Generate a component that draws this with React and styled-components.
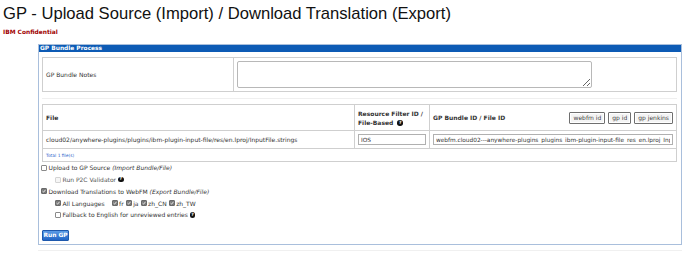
import React from 'react';
import styled, {createGlobalStyle} from 'styled-components';

const GlobalStyle = createGlobalStyle`
  body {
    margin: 0;
    background: #fff;
    font-family: "DejaVu Sans", Verdana, sans-serif;
    color: #333;
  }
`;

const Page = styled.div`
  padding: 4px 3px 0 3px;
  width: 682px;
`;

const Title = styled.h1`
  margin: 0;
  font-family: "Liberation Sans", Arial, sans-serif;
  font-weight: normal;
  font-size: 16.6px;
  line-height: 19px;
  color: #111;
`;

const Confidential = styled.div`
  margin-top: 5px;
  font-size: 5.9px;
  line-height: 8px;
  font-weight: bold;
  color: #a00000;
`;

const Panel = styled.div`
  margin: 8px 0 0 35px;
  width: 642px;
  border: 1px solid #a9bfdc;
`;

const PanelHeader = styled.div`
  height: 7px;
  line-height: 7px;
  padding-left: 1px;
  background: #0d5bb5;
  color: #fff;
  font-size: 5.9px;
  font-weight: bold;
`;

const PanelBody = styled.div`
  padding: 5px 4px 3px 3px;
`;

const Table = styled.table`
  width: 635px;
  border-collapse: collapse;
  table-layout: fixed;
  font-size: 6px;
`;

const Cell = styled.td`
  border: 1px solid #cfcfcf;
  padding: 0 3px;
  vertical-align: middle;
  font-weight: ${p => (p.$head ? 'bold' : 'normal')};
  height: ${p => p.$h}px;
  line-height: 9px;
  color: #333;
`;

const NotesArea = styled.textarea`
  display: block;
  width: 355px;
  height: 27px;
  margin: 0;
  box-sizing: border-box;
  border: 1px solid #b8b8b8;
  border-radius: 2px;
  font-size: 6px;
`;

const Divider = styled.div`
  height: 0;
  margin: 6px 0 5px 0;
  border-top: 1px solid #efefef;
`;

const HeadRow = styled.div`
  display: flex;
  align-items: center;
  justify-content: space-between;
`;

const Buttons = styled.div`
  display: flex;
  gap: 3px;
`;

const SmallButton = styled.button`
  height: 12px;
  padding: 0 3px;
  margin: 0;
  font-family: "DejaVu Sans", Verdana, sans-serif;
  font-size: 6px;
  color: #444;
  background: #f4f4f4;
  border: 1px solid #6f6f6f;
  box-shadow: inset 0 0 0 1px #fff;
  border-radius: 1px;
`;

const TextInput = styled.input`
  display: block;
  width: 100%;
  height: 11px;
  box-sizing: border-box;
  margin: 0;
  padding: 0 2px;
  border: 1px solid #b0b0b0;
  font-family: "DejaVu Sans", Verdana, sans-serif;
  font-size: 5.8px;
  color: #333;
`;

const Total = styled.span`
  font-size: 4.4px;
  color: #3366cc;
`;

const Options = styled.div`
  margin: 0 0 0 -1px;
`;

const Row = styled.div`
  display: flex;
  align-items: center;
  height: 11.75px;
  padding-left: ${p => (p.$nested ? 14 : 0)}px;
  font-size: 6px;
  color: ${p => (p.$disabled ? '#555' : '#333')};
`;

const Box = styled.span`
  display: inline-flex;
  align-items: center;
  justify-content: center;
  width: 6px;
  height: 6px;
  box-sizing: border-box;
  border-radius: 1px;
  border: 1px solid ${p => (p.$checked ? '#6a6a6a' : p.$disabled ? '#d4d4d4' : '#8a8a8a')};
  background: ${p => (p.$checked ? '#7a7a7a' : p.$disabled ? '#f6f6f6' : '#fff')};
  margin-right: 1.5px;
  margin-left: ${p => p.$gap || 0}px;
  flex: none;
`;

const Label = styled.span`
  white-space: nowrap;
`;

const Note = styled.i`
  margin-left: 2px;
`;

const Help = styled.span`
  display: inline-flex;
  align-items: center;
  justify-content: center;
  width: 5.5px;
  height: 5.5px;
  margin-left: 2px;
  border-radius: 50%;
  background: #111;
  color: #fff;
  font-size: 4.4px;
  font-weight: bold;
  line-height: 1;
  vertical-align: middle;
`;

const RunButton = styled.button`
  display: block;
  margin: 9px 0 0 0;
  width: 27px;
  height: 11px;
  padding: 0;
  white-space: nowrap;
  font-family: "DejaVu Sans", Verdana, sans-serif;
  font-size: 5.9px;
  font-weight: bold;
  color: #fff;
  background: linear-gradient(#5b9be6, #2265c6);
  border: 1px solid #1d58ad;
  border-radius: 1px;
`;

const Shadow = styled.div`
  margin: 5px 0 0 35px;
  width: 644px;
  border-top: 1px solid #f0f0f0;
`;

const Check = ({checked, disabled, gap}) => (
  <Box $checked={checked} $disabled={disabled} $gap={gap}>
    {checked && (
      <svg width="4" height="4" viewBox="0 0 8 8">
        <path d="M1 4.2 L3.2 6.3 L7 1.6" fill="none" stroke="#fff" strokeWidth="1.6" />
      </svg>
    )}
  </Box>
);

const App = () => {
  return (
    <Page>
      <GlobalStyle />
      <Title>GP - Upload Source (Import) / Download Translation (Export)</Title>
      <Confidential>IBM Confidential</Confidential>

      <Panel>
        <PanelHeader>GP Bundle Process</PanelHeader>
        <PanelBody>
          <Table>
            <colgroup>
              <col style={{width: 191}} />
              <col />
            </colgroup>
            <tbody>
              <tr>
                <Cell $h={33}>GP Bundle Notes</Cell>
                <Cell $h={33}>
                  <NotesArea />
                </Cell>
              </tr>
            </tbody>
          </Table>

          <Divider />

          <Table>
            <colgroup>
              <col style={{width: 312}} />
              <col style={{width: 75}} />
              <col />
            </colgroup>
            <tbody>
              <tr>
                <Cell $head $h={25}>File</Cell>
                <Cell $head $h={25}>
                  Resource Filter ID /<br />File-Based <Help>?</Help>
                </Cell>
                <Cell $head $h={25}>
                  <HeadRow>
                    <span>GP Bundle ID / File ID</span>
                    <Buttons>
                      <SmallButton>webfm id</SmallButton>
                      <SmallButton>gp id</SmallButton>
                      <SmallButton>gp jenkins</SmallButton>
                    </Buttons>
                  </HeadRow>
                </Cell>
              </tr>
              <tr>
                <Cell $h={17}>cloud02/anywhere-plugins/plugins/ibm-plugin-input-file/res/en.lproj/InputFile.strings</Cell>
                <Cell $h={17}>
                  <TextInput defaultValue="IOS" />
                </Cell>
                <Cell $h={17}>
                  <TextInput defaultValue="webfm.cloud02---anywhere-plugins_plugins_ibm-plugin-input-file_res_en.lproj_InputFile.strings" />
                </Cell>
              </tr>
              <tr>
                <Cell colSpan={3} $h={12}>
                  <Total>Total 1 file(s)</Total>
                </Cell>
              </tr>
            </tbody>
          </Table>

          <Options>
            <Row>
              <Check />
              <Label>Upload to GP Source</Label>
              <Note>(Import Bundle/File)</Note>
            </Row>
            <Row $nested $disabled>
              <Check disabled />
              <Label>Run P2C Validator</Label>
              <Help>?</Help>
            </Row>
            <Row>
              <Check checked />
              <Label>Download Translations to WebFM</Label>
              <Note>(Export Bundle/File)</Note>
            </Row>
            <Row $nested>
              <Check checked />
              <Label>All Languages</Label>
              <Check checked gap={7} />
              <Label>fr</Label>
              <Check checked gap={2} />
              <Label>ja</Label>
              <Check checked gap={2} />
              <Label>zh_CN</Label>
              <Check checked gap={2} />
              <Label>zh_TW</Label>
            </Row>
            <Row $nested>
              <Check />
              <Label>Fallback to English for unreviewed entries</Label>
              <Help>?</Help>
            </Row>
          </Options>

          <RunButton>Run GP</RunButton>
        </PanelBody>
      </Panel>
      <Shadow />
    </Page>
  );
};

export default App;
